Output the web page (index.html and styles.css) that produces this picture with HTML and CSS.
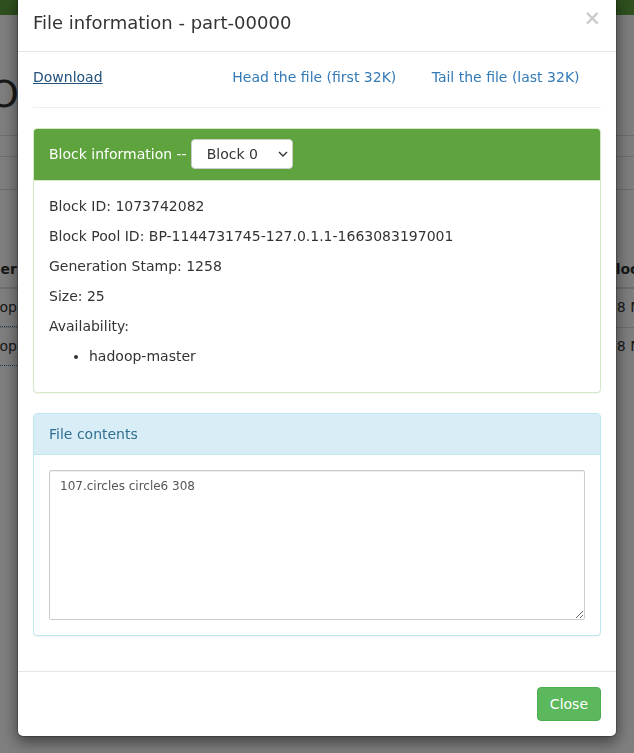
FILE: index.html
```html
<!DOCTYPE html>
<html lang="en">
<head>
<meta charset="utf-8">
<title>File information - part-00000</title>
<link rel="stylesheet" href="styles.css">
</head>
<body>
<div class="page" aria-hidden="true">
  <div class="navbar"></div>
  <div class="page-header"><span class="big">O</span></div>
  <div class="rule r1"></div>
  <div class="rule r2"></div>
  <div class="rule r3"></div>
  <div class="tbl">
    <div class="tr th"><span class="cl">Owner</span><span class="cr"><span class="cr-head">Block Size</span></span></div>
    <div class="tr td"><span class="cl"><span class="dotted">hadoop</span></span><span class="cr">128 MB</span></div>
    <div class="tr td"><span class="cl"><span class="dotted">hadoop</span></span><span class="cr">128 MB</span></div>
  </div>
</div>
<div class="backdrop"></div>
<div class="modal">
  <div class="modal-content">
    <div class="modal-header">
      <h4 class="modal-title">File information - part-00000</h4>
      <button class="close" type="button">×</button>
    </div>
    <div class="modal-body">
      <div class="links">
        <div class="col"><a class="link active" href="#">Download</a></div>
        <div class="col"><a class="link" href="#">Head the file (first 32K)</a></div>
        <div class="col"><a class="link" href="#">Tail the file (last 32K)</a></div>
      </div>
      <hr>
      <div class="panel panel-success">
        <div class="panel-heading">
          <span>Block information --</span>
          <span class="select-wrap">
            <select><option>Block 0</option></select>
            <svg class="chev" width="10" height="6" viewBox="0 0 10 6"><polyline points="1,1 5,5 9,1" fill="none" stroke="#333" stroke-width="1.4"/></svg>
          </span>
        </div>
        <div class="panel-body">
          <p>Block ID: 1073742082</p>
          <p>Block Pool ID: BP-1144731745-127.0.1.1-1663083197001</p>
          <p>Generation Stamp: 1258</p>
          <p>Size: 25</p>
          <p>Availability:</p>
          <ul><li>hadoop-master</li></ul>
        </div>
      </div>
      <div class="panel panel-info">
        <div class="panel-heading">File contents</div>
        <div class="panel-body"><textarea readonly>107.circles circle6 308</textarea></div>
      </div>
    </div>
    <div class="modal-footer"><button class="btn btn-success" type="button">Close</button></div>
  </div>
</div>
</body>
</html>
```

FILE: styles.css
```css
* { box-sizing: border-box; }
html, body { margin: 0; height: 100%; overflow: hidden; }
body {
  font-family: "DejaVu Sans", sans-serif;
  font-size: 14px;
  line-height: 1.42857143;
  color: #333;
  background: #fff;
}

/* underlying page */
.page { position: fixed; inset: 0; background: #fff; overflow: hidden; }
.navbar { height: 15px; background: #5fa33e; }
.page-header { height: 120px; padding-top: 59px; }
.big { display: block; margin-left: -11px; font-size: 38px; line-height: 1.1; color: #333; }
.rule { border-top: 1px solid #ddd; }
.r1 { height: 21px; }
.r2 { height: 33px; }
.r3 { height: 62px; }
.tr { display: flex; justify-content: space-between; padding-top: 8px; }
.th { font-weight: bold; height: 38px; border-bottom: 2px solid #ddd; }
.td { height: 38px; }
.td + .td { border-top: 1px solid #ddd; height: 39px; }
.cl { width: 17px; display: flex; justify-content: flex-end; white-space: nowrap; }
.cr { width: 35px; white-space: nowrap; }
.cr-head { padding-left: 6px; }
.dotted { border-bottom: 1px dotted #337ab7; }

.backdrop { position: fixed; inset: 0; background: rgba(0, 0, 0, .5); }

/* modal */
.modal { position: relative; z-index: 2; width: 600px; margin: -6px auto 0; }
.modal-content {
  background: #fff;
  background-clip: padding-box;
  border: 1px solid rgba(0, 0, 0, .2);
  border-radius: 6px;
  box-shadow: 0 5px 15px rgba(0, 0, 0, .5);
}
.modal-header {
  display: flex;
  justify-content: space-between;
  align-items: flex-start;
  padding: 15px;
  border-bottom: 1px solid #e5e5e5;
}
.modal-title { margin: 0; font-size: 18px; font-weight: normal; line-height: 1.42857143; }
.close {
  appearance: none;
  border: 0;
  background: none;
  padding: 0;
  margin-top: -2px;
  font-family: inherit;
  font-size: 21px;
  font-weight: bold;
  line-height: 1;
  color: #000;
  opacity: .2;
}
.modal-body { padding: 15px; }

.links { display: grid; grid-template-columns: repeat(3, 1fr); margin: 0 -15px; }
.col { padding: 0 15px; }
.link { color: #337ab7; text-decoration: none; }
.link.active { color: #23527c; text-decoration: underline; }

hr { margin: 20px 0; border: 0; border-top: 1px solid #eee; }

.panel {
  margin-bottom: 20px;
  background: #fff;
  border: 1px solid transparent;
  border-radius: 4px;
  box-shadow: 0 1px 1px rgba(0, 0, 0, .05);
}
.panel-heading {
  padding: 10px 15px;
  border-bottom: 1px solid transparent;
  border-top-left-radius: 3px;
  border-top-right-radius: 3px;
}
.panel-body { padding: 15px; }
.panel-success { border-color: #d6e9c6; }
.panel-success > .panel-heading {
  display: flex;
  align-items: center;
  gap: 4px;
  padding-bottom: 11px;
  background: #5fa33e;
  color: #fff;
  border-color: #d6e9c6;
}
.panel-info { border-color: #bce8f1; }
.panel-info > .panel-heading { background: #d9edf7; color: #31708f; border-color: #bce8f1; }

p { margin: 0 0 10px; }
ul { margin: 0 0 11px; padding-left: 40px; }

.select-wrap { position: relative; display: block; width: 102px; height: 30px; }
.select-wrap select {
  appearance: none;
  -webkit-appearance: none;
  display: block;
  width: 100%;
  height: 100%;
  margin: 0;
  padding: 0 0 0 15px;
  border: 1px solid #ccc;
  border-radius: 4px;
  background: #fff;
  color: #333;
  font-family: inherit;
  font-size: 14px;
}
.chev { position: absolute; right: 5px; top: 12px; pointer-events: none; }

textarea {
  display: block;
  width: 100%;
  height: 150px;
  margin: 0;
  padding: 7px 10px 6px;
  font-family: "DejaVu Sans", sans-serif;
  font-size: 12px;
  line-height: 1.42857143;
  color: #555;
  border: 1px solid #ccc;
  border-radius: 2px;
  box-shadow: inset 0 1px 1px rgba(0, 0, 0, .075);
  background: #fff;
}

.modal-footer { padding: 15px; text-align: right; border-top: 1px solid #e5e5e5; }
.btn {
  display: inline-block;
  padding: 6px 12px;
  font-family: inherit;
  font-size: 14px;
  line-height: 1.42857143;
  border: 1px solid transparent;
  border-radius: 4px;
}
.btn-success { color: #fff; background: #5cb85c; border-color: #4cae4c; }
```
